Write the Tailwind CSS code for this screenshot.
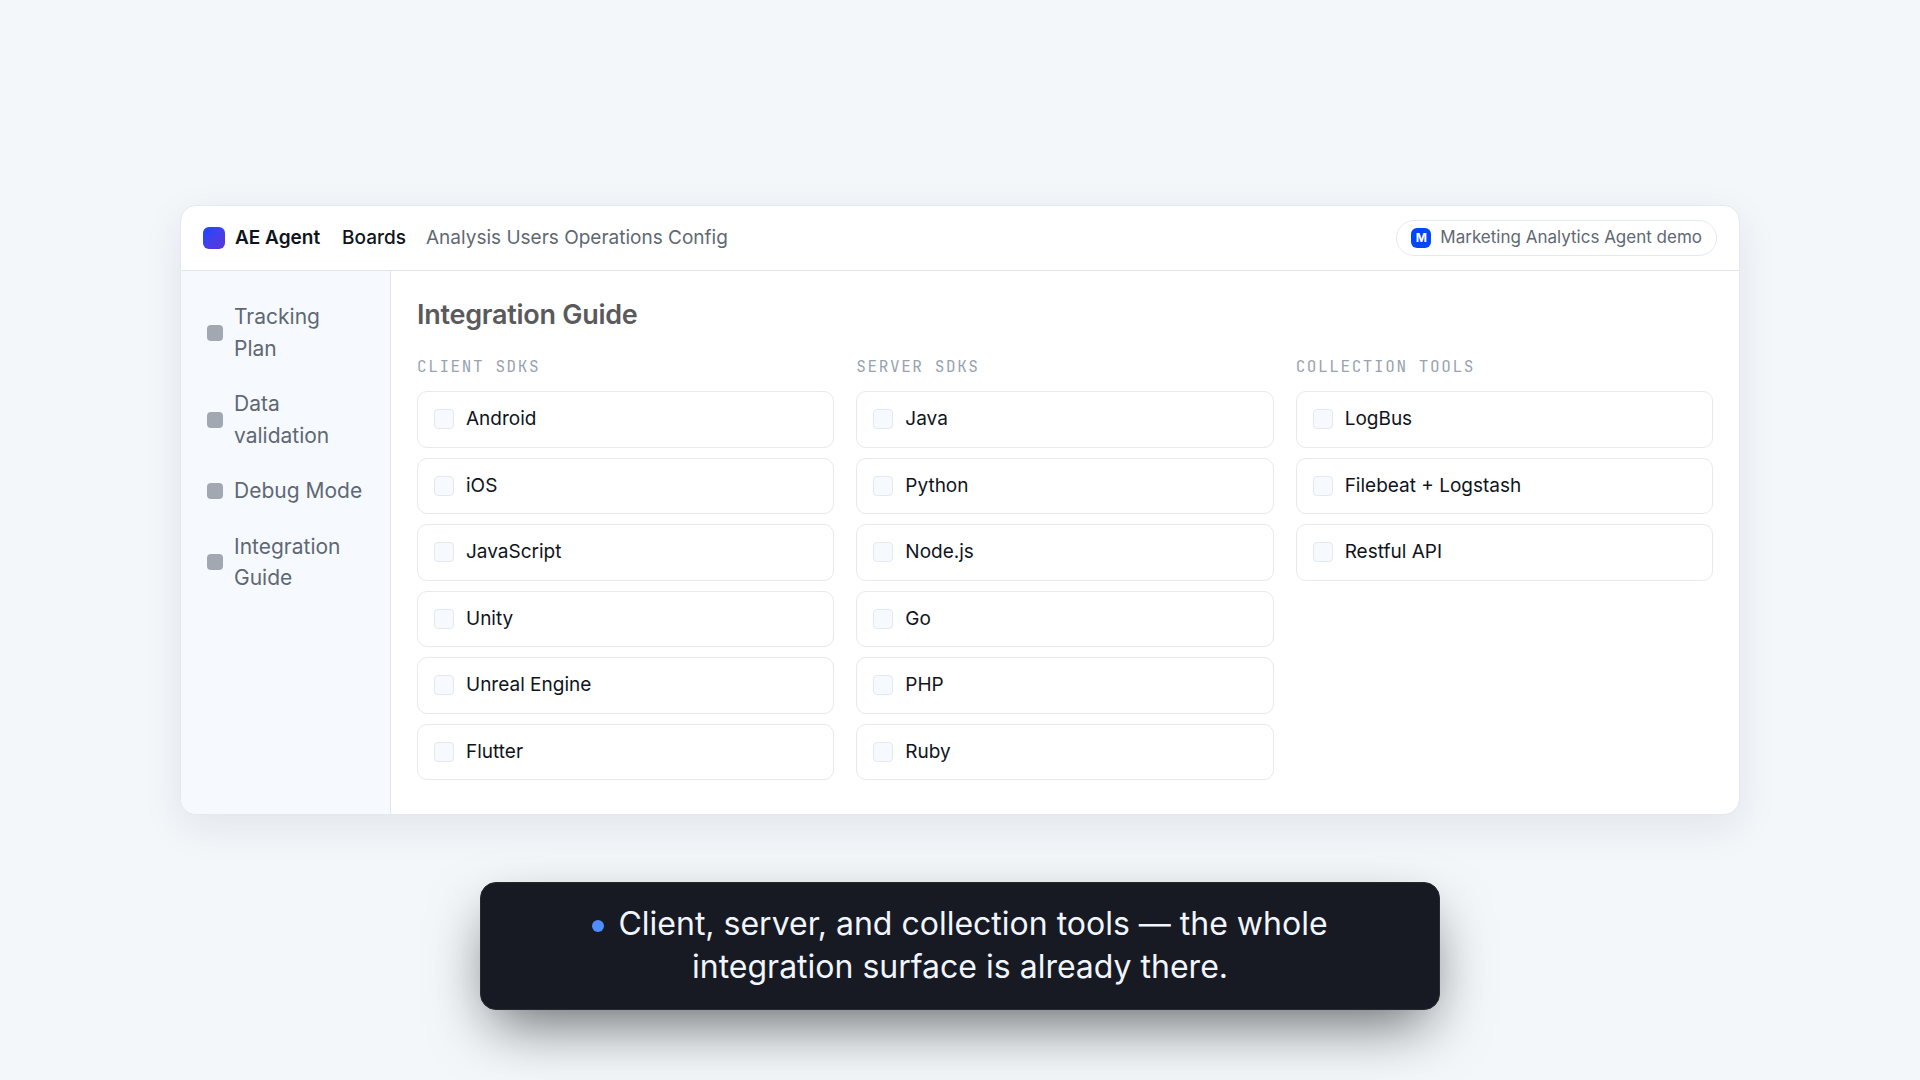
<!DOCTYPE html>
<html lang="en">
<head>
    <meta charset="UTF-8">
    <meta name="viewport" content="width=device-width, initial-scale=1.0">
    <title>Integration Guide - AE Agent</title>
    <script src="https://cdn.jsdelivr.net/npm/@tailwindcss/browser@4"></script>
</head>
<body class="bg-[#f3f7fa] min-h-screen flex flex-col items-center px-6 pt-[205px] pb-16 font-['Inter',sans-serif] text-[#0f141c]">

    <div class="w-full max-w-[1560px] bg-white border border-[#e4e9ef] rounded-2xl overflow-hidden shadow-[0_12px_40px_rgba(20,30,70,0.08)]">

        <header class="flex items-center justify-between px-[22px] py-3.5 border-b border-[#e2e6eb]">
            <div class="flex items-center text-[19px] leading-normal">
                <span class="size-[22px] rounded-md bg-linear-135 from-[#0a48ff] to-[#5b35d5] mr-2.5"></span>
                <span class="font-semibold mr-[22px]">AE Agent</span>
                <nav class="flex items-center gap-5">
                    <a href="#" class="font-medium">Boards</a>
                    <span class="text-[#5f6873]">
                        <a href="#">Analysis</a>
                        <a href="#">Users</a>
                        <a href="#">Operations</a>
                        <a href="#">Config</a>
                    </span>
                </nav>
            </div>
            <button type="button" class="flex items-center gap-[9px] h-9 px-3.5 border border-[#e4e9f0] rounded-full text-[17px] text-[#5f6873]">
                <span class="size-5 rounded-md bg-[#0047ff] text-white text-xs font-bold flex items-center justify-center">M</span>
                Marketing Analytics Agent demo
            </button>
        </header>

        <div class="flex">
            <aside class="w-[210px] shrink-0 bg-[#f6fafe] border-r border-[#e2e6eb] px-3 py-5">
                <nav class="flex flex-col gap-1 text-[21px] leading-normal text-[#5f6873]">
                    <a href="#" class="flex items-center gap-[11px] px-3.5 py-2.5">
                        <span class="size-4 shrink-0 rounded bg-[#a1a8b2]"></span>Tracking Plan
                    </a>
                    <a href="#" class="flex items-center gap-[11px] px-3.5 py-2.5">
                        <span class="size-4 shrink-0 rounded bg-[#a1a8b2]"></span>Data validation
                    </a>
                    <a href="#" class="flex items-center gap-[11px] px-3.5 py-2.5">
                        <span class="size-4 shrink-0 rounded bg-[#a1a8b2]"></span>Debug Mode
                    </a>
                    <a href="#" class="flex items-center gap-[11px] px-3.5 py-2.5">
                        <span class="size-4 shrink-0 rounded bg-[#a1a8b2]"></span>Integration Guide
                    </a>
                </nav>
            </aside>

            <main class="flex-1 px-[26px] pt-[26px] pb-[34px]">
                <h1 class="text-[27px] leading-[35px] font-semibold tracking-[-0.01em] text-[#5a5a5c] mb-[23px]">Integration Guide</h1>

                <div id="sdk-columns" class="grid grid-cols-3 gap-[22px]"></div>
            </main>
        </div>
    </div>

    <div class="mt-[67px] w-full max-w-[960px] bg-[#171a23] border border-[#252933] rounded-2xl px-10 pt-[19px] pb-[21px] text-center text-[32px] leading-[1.35] text-[#f1f5fd] shadow-[0_24px_60px_-12px_rgba(0,0,0,0.6)]">
        <p class="mx-auto max-w-[760px]"><span class="inline-block size-3 rounded-full bg-[#4d8dff] mr-3.5 align-[3px]"></span>Client, server, and collection tools — the whole integration surface is already there.</p>
    </div>

    <script>
        const columns = [
            { title: 'Client SDKs', items: ['Android', 'iOS', 'JavaScript', 'Unity', 'Unreal Engine', 'Flutter'] },
            { title: 'Server SDKs', items: ['Java', 'Python', 'Node.js', 'Go', 'PHP', 'Ruby'] },
            { title: 'Collection Tools', items: ['LogBus', 'Filebeat + Logstash', 'Restful API'] },
        ];

        // One column per group, one selectable row per SDK
        document.getElementById('sdk-columns').innerHTML = columns.map(column => `
            <section>
                <h2 class="font-['JetBrains_Mono','Liberation_Mono',monospace] text-base leading-6 tracking-widest uppercase text-[#98a2b0] mb-3">${column.title}</h2>
                <div class="flex flex-col gap-2.5">
                    ${column.items.map(item => `
                        <label class="flex items-center gap-3 px-4 py-[13px] border border-[#e6e9ed] rounded-[10px] text-[19px] leading-normal">
                            <input type="checkbox" class="appearance-none size-5 shrink-0 rounded border border-[#e3e9f0] bg-[#f6fafe] checked:bg-[#0a4bff]">
                            ${item}
                        </label>
                    `).join('')}
                </div>
            </section>
        `).join('');
    </script>
</body>
</html>
